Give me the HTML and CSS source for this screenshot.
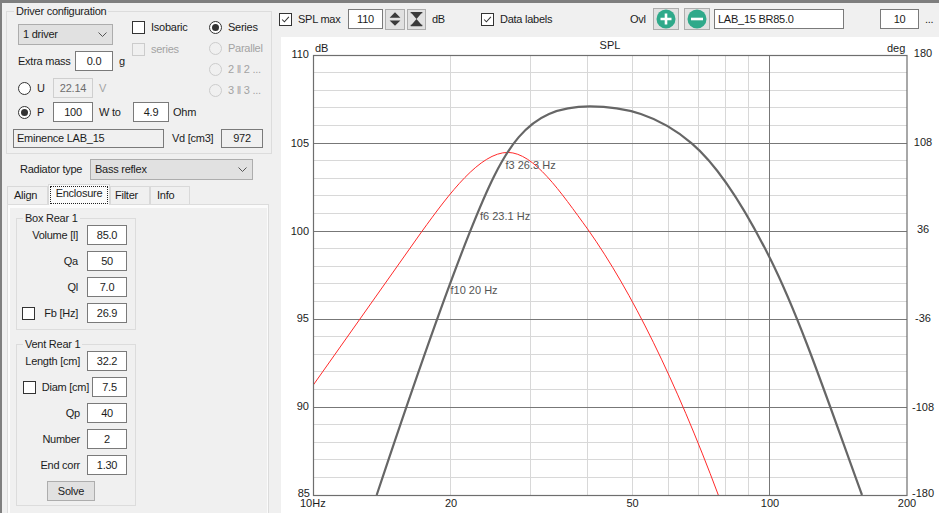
FILE: index.html
```html
<!DOCTYPE html>
<html lang="en">
<head>
<meta charset="utf-8">
<title>Driver configuration</title>
<link rel="stylesheet" href="styles.css">
</head>
<body>
<div class="app">
  <aside class="left">
    <fieldset class="group driver">
      <legend>Driver configuration</legend>
      <div class="dc-top">
        <div class="dc-main">
          <div class="dc-head">
            <div class="dc-head-left">
              <div class="combo combo-driver"><span>1 driver</span><svg class="chev" viewBox="0 0 9 5"><path d="M.5 .5 4.500 4.500 8.500 .5"/></svg></div>
              <div class="extra-row"><span class="extra-label">Extra mass</span><span class="field w38">0.0</span><span class="unit-g">g</span></div>
            </div>
            <div class="dc-checks">
              <div class="opt"><span class="check"></span><span>Isobaric</span></div>
              <div class="opt off"><span class="check"></span><span>series</span></div>
            </div>
          </div>
          <div class="power-row row-u"><span class="radio"></span><span class="pw-label">U</span><span class="field w40 dis">22.14</span><span class="pw-unit off-text">V</span></div>
          <div class="power-row row-p"><span class="radio on"></span><span class="pw-label">P</span><span class="field w40">100</span><span class="pw-unit">W to</span><span class="field w36">4.9</span><span class="ohm">Ohm</span></div>
        </div>
        <div class="dc-radios">
          <div class="opt"><span class="radio on"></span><span>Series</span></div>
          <div class="opt off"><span class="radio"></span><span>Parallel</span></div>
          <div class="opt off"><span class="radio"></span><span>2 ‖ 2 ...</span></div>
          <div class="opt off"><span class="radio"></span><span>3 ‖ 3 ...</span></div>
        </div>
      </div>
      <div class="name-row"><span class="field name">Eminence LAB_15</span><span class="vd-label">Vd [cm3]</span><span class="field ro w42">972</span></div>
    </fieldset>

    <div class="radiator"><span class="rad-label">Radiator type</span><div class="combo combo-rad"><span>Bass reflex</span><svg class="chev" viewBox="0 0 9 5"><path d="M.5 .5 4.500 4.500 8.500 .5"/></svg></div></div>

    <div class="tabs">
      <span class="tab t-align">Align</span>
      <span class="tab active"><span class="focus">Enclosure</span></span>
      <span class="tab t-filter">Filter</span>
      <span class="tab t-info">Info</span>
    </div>
    <div class="tabpage">
      <div class="tabinner">
        <fieldset class="group sub box">
          <legend>Box Rear 1</legend>
          <div class="frow"><span class="flabel">Volume [l]</span><span class="field w40">85.0</span></div>
          <div class="frow"><span class="flabel">Qa</span><span class="field w40">50</span></div>
          <div class="frow"><span class="flabel">Ql</span><span class="field w40">7.0</span></div>
          <div class="frow"><span class="check"></span><span class="flabel">Fb [Hz]</span><span class="field w40">26.9</span></div>
        </fieldset>
        <fieldset class="group sub vent">
          <legend>Vent Rear 1</legend>
          <div class="frow"><span class="flabel">Length [cm]</span><span class="field w40">32.2</span></div>
          <div class="frow diam"><span class="check"></span><span class="flabel">Diam [cm]</span><span class="field w35">7.5</span></div>
          <div class="frow"><span class="flabel">Qp</span><span class="field w40">40</span></div>
          <div class="frow"><span class="flabel">Number</span><span class="field w40">2</span></div>
          <div class="frow"><span class="flabel">End corr</span><span class="field w40">1.30</span></div>
          <div class="solve">Solve</div>
        </fieldset>
      </div>
    </div>
  </aside>

  <main class="right">
    <div class="toolbar">
      <span class="check"><svg viewBox="0 0 13 13"><path d="M2.500 6.500 5.200 9.200 10.500 3.500"/></svg></span>
      <span class="tb-text t-spl">SPL max</span>
      <span class="field w35">110</span>
      <span class="tbtn ud"><svg viewBox="0 0 20 21"><path d="M10 2.500 16 8.500H4ZM4 11.500H16L10 17.500Z"/></svg></span>
      <span class="tbtn hg"><svg viewBox="0 0 19 21"><path d="M3 2.500H16L9.500 10 16 17.500H3L9.500 10Z"/><path d="M3 2h13v1.500H3zM3 16.500h13V18H3z"/></svg></span>
      <span class="tb-text t-db">dB</span>
      <span class="check"><svg viewBox="0 0 13 13"><path d="M2.500 6.500 5.200 9.200 10.500 3.500"/></svg></span>
      <span class="tb-text t-labels">Data labels</span>
      <span class="tb-text t-ovl">Ovl</span>
      <span class="tbtn round first"><svg viewBox="0 0 24 20"><circle cx="12" cy="10" r="9.500"/><path d="M12 4.500v11M6.500 10h11"/></svg></span>
      <span class="tbtn round second"><svg viewBox="0 0 24 20"><circle cx="12" cy="10" r="9.500"/><path d="M6 10h12"/></svg></span>
      <span class="field ovl-name">LAB_15 BR85.0</span>
      <span class="field w39 ovl-count">10</span>
      <span class="tb-text t-more">...</span>
    </div>
    <svg class="chart" viewBox="281 37 658 476" xmlns="http://www.w3.org/2000/svg">
      <path class="grid" d="M313 72.500H907M313 90.500H907M313 107.500H907M313 125.500H907M313 160.500H907M313 178.500H907M313 195.500H907M313 213.500H907M313 248.500H907M313 266.500H907M313 283.500H907M313 301.500H907M313 336.500H907M313 354.500H907M313 371.500H907M313 389.500H907M313 424.500H907M313 442.500H907M313 459.500H907M313 477.500H907"/>
      <path class="grid" d="M450.500 55V495M530.500 55V495M587.500 55V495M632.500 55V495M668.500 55V495M698.500 55V495M725.500 55V495M748.500 55V495"/>
      <path class="major" d="M313 143.500H907M313 231.500H907M313 319.500H907M313 407.500H907M769.500 55V495"/>
      <path class="red" d="M313.300 385L421.700 231.700C449.700 193 480 152.400 508 152.400C534 153 560 191 588.300 230C631.300 291 675.300 380 718.300 495"/>
      <path class="gray" d="M376.700 495C407 404 440 306.700 470 231.700C504 146.700 526 106.300 590 106.300C624 106.300 657.700 114.400 691.700 143.300C717.700 165.400 744 206.300 770 258.300C801 320.300 831 410 862 495"/>
      <rect class="frame" x="313.500" y="55.500" width="593.500" height="440"/>
      <g class="axis">
        <text class="end" x="309" y="58">110</text>
        <text class="end" x="309" y="147">105</text>
        <text class="end" x="309" y="235">100</text>
        <text class="end" x="309" y="322">95</text>
        <text class="end" x="309" y="410">90</text>
        <text class="end" x="310" y="497">85</text>
        <text class="mid" x="923" y="57">180</text>
        <text class="mid" x="923" y="146">108</text>
        <text class="mid" x="923" y="233">36</text>
        <text class="mid" x="923" y="322">-36</text>
        <text class="mid" x="923" y="411">-108</text>
        <text class="mid" x="923" y="497">-180</text>
        <text x="300" y="507">10Hz</text>
        <text class="mid" x="451" y="507">20</text>
        <text class="mid" x="632.500" y="507">50</text>
        <text class="mid" x="770" y="507">100</text>
        <text class="mid" x="907" y="507">200</text>
        <text x="315" y="52">dB</text>
        <text class="mid" x="610" y="49">SPL</text>
        <text x="887" y="52">deg</text>
      </g>
      <g class="datalabels">
        <text x="505.500" y="169">f3 26.3 Hz</text>
        <text x="480" y="220">f6 23.1 Hz</text>
        <text x="450.500" y="294">f10 20 Hz</text>
      </g>
    </svg>
  </main>
</div>
</body>
</html>
```

FILE: styles.css
```css
* { box-sizing: border-box; }
html, body { margin: 0; height: 100%; overflow: hidden; }
body {
  font: 11px/13px "Liberation Sans", Arial, sans-serif;
  letter-spacing: -.25px;
  color: #1c1c1c;
  background: #f0f0f0;
}
.app {
  display: flex;
  width: 939px;
  height: 513px;
  border-top: 3px solid #7f7f7f;
  border-left: 2px solid #7f7f7f;
  overflow: hidden;
}
.left { width: 268px; flex: none; }
.right { flex: 1; min-width: 0; display: flex; flex-direction: column; }

/* shared controls */
.group {
  margin: 0;
  min-width: 0;
  border: 1px solid #dcdcdc;
  padding: 0;
}
.group legend { padding: 0 2px; margin-left: 0; line-height: 13px; }
.driver legend { margin-left: 1px; }
.field {
  display: flex;
  align-items: center;
  justify-content: center;
  flex: none;
  height: 20px;
  background: #fff;
  border: 1px solid #7a7a7a;
}
.field.dis { background: #f0f0f0; border-color: #cfcfcf; color: #6d6d6d; }
.field.ro, .field.name { background: #f0f0f0; }
.w35 { width: 35px; }
.w36 { width: 36px; }
.w38 { width: 38px; }
.w39 { width: 39px; }
.w40 { width: 40px; }
.w42 { width: 42px; }
.check {
  display: block;
  flex: none;
  width: 13px;
  height: 13px;
  background: #fff;
  border: 1px solid #333;
}
.check svg { display: block; width: 11px; height: 11px; }
.check path { fill: none; stroke: #333; stroke-width: 1.2; }
.radio {
  position: relative;
  display: block;
  flex: none;
  width: 13px;
  height: 13px;
  background: #fff;
  border: 1px solid #333;
  border-radius: 50%;
}
.radio.on::after {
  content: "";
  position: absolute;
  inset: 2px;
  border-radius: 50%;
  background: #333;
}
.opt { display: flex; align-items: center; gap: 6px; height: 13px; }
.opt.off { color: #a3a3a3; }
.opt.off .check, .opt.off .radio { border-color: #cccccc; background: #f0f0f0; }
.off-text { color: #a3a3a3; }
.combo {
  display: flex;
  align-items: center;
  justify-content: space-between;
  height: 21px;
  padding: 0 5px 0 4px;
  background: #e1e1e1;
  border: 1px solid #adadad;
}
.chev { width: 9px; height: 5px; }
.chev path { fill: none; stroke: #555; stroke-width: 1; }

/* driver group */
.driver { width: 266px; margin: 2px 0 0 4px; padding: 0 6px 5px; }
.dc-top { display: flex; }
.dc-main { width: 196px; flex: none; }
.dc-head { display: flex; height: 54px; }
.dc-head-left { width: 119px; flex: none; padding: 6px 0 0 5px; }
.combo-driver { width: 95px; }
.extra-row { display: flex; align-items: center; margin-top: 6px; }
.extra-label { width: 57px; }
.unit-g { margin-left: 6px; }
.dc-checks { display: flex; flex-direction: column; gap: 9px; padding-top: 3px; }
.power-row { display: flex; align-items: center; padding-left: 5px; }
.row-u { margin-top: 6px; }
.row-p { margin-top: 4px; }
.pw-label { width: 16px; margin-left: 6px; }
.pw-unit { width: 34px; margin-left: 6px; }
.ohm { margin-left: 4px; }
.dc-radios { display: flex; flex-direction: column; gap: 8px; padding-top: 3px; }
.name-row { display: flex; align-items: center; margin-top: 7px; }
.field.name { width: 151px; height: 19px; justify-content: flex-start; padding-left: 3px; }
.vd-label { width: 49px; margin-left: 8px; }
.field.w42 { height: 19px; }

/* radiator */
.radiator { display: flex; align-items: center; margin-top: 5px; padding-left: 18px; }
.rad-label { width: 70px; }
.combo-rad { width: 163px; }

/* tabs */
.tabs { display: flex; align-items: flex-end; height: 20px; margin: 4px 0 0 5px; }
.tab {
  display: flex;
  align-items: center;
  height: 18px;
  background: #f0f0f0;
  border: 1px solid #d9d9d9;
  border-bottom: 0;
}
.t-align { width: 41px; padding-left: 6px; }
.t-filter { width: 40px; padding-left: 4px; }
.t-info { width: 40px; padding-left: 6px; }
.tab.active {
  position: relative;
  width: 62px;
  height: 21px;
  margin-bottom: -1px;
  padding: 1px;
  background: #fbfbfb;
}
.focus {
  display: flex;
  align-items: center;
  justify-content: center;
  width: 100%;
  height: 100%;
  padding-bottom: 3px;
  border: 1px dotted #222;
}
.tabpage {
  width: 262px;
  height: 320px;
  margin-left: 5px;
  padding: 3px 1px 0 2px;
  background: #fbfbfb;
  border: 1px solid #dcdcdc;
  border-bottom: 0;
}
.tabinner { height: 100%; padding: 4px 0 0 6px; background: #f0f0f0; }

/* sub groups */
.sub { width: 120px; padding: 0 8px 6px 6px; }
.frow { display: flex; align-items: center; justify-content: flex-end; gap: 9px; height: 20px; margin-bottom: 6px; }
.frow:last-of-type { margin-bottom: 0; }
.frow .check { margin-right: auto; }
.flabel { white-space: nowrap; }
.vent { margin-top: 8px; padding-bottom: 4px; }
.vent .frow { gap: 7px; }
.vent .diam { gap: 3px; }
.solve {
  display: flex;
  align-items: center;
  justify-content: center;
  width: 48px;
  height: 20px;
  margin: 6px 0 0 24px;
  background: #e1e1e1;
  border: 1px solid #adadad;
}

/* toolbar */
.toolbar { display: flex; align-items: center; flex: none; height: 34px; padding: 0 0 2px 9px; }
.tb-text { flex: none; white-space: nowrap; }
.t-spl { width: 50px; margin-left: 6px; }
.t-db { width: 49px; margin-left: 6px; }
.t-labels { width: 130px; margin-left: 6px; }
.t-ovl { width: 23px; }
.t-more { margin-left: 6px; }
.tbtn {
  display: block;
  flex: none;
  height: 21px;
  background: #e1e1e1;
  border: 1px solid #adadad;
}
.tbtn svg { display: block; width: 100%; height: 100%; }
.ud { width: 20px; margin-left: 2px; }
.hg { width: 19px; margin-left: 2px; }
.ud path, .hg path { fill: #3a3a3a; }
.round { width: 26px; height: 22px; }
.round.second { margin-left: 5px; }
.round circle { fill: #2fa98a; }
.round path { fill: none; stroke: #fff; stroke-width: 2.6; }
.ovl-name { width: 130px; margin-left: 4px; justify-content: flex-start; padding-left: 3px; }
.ovl-count { margin-left: 36px; }

/* chart */
.chart { display: block; width: 658px; height: 476px; margin-left: 11px; flex: none; background: #fff; }
.grid { fill: none; stroke: #d8d8d8; stroke-width: 1; }
.major { fill: none; stroke: #777; stroke-width: 1; }
.frame { fill: none; stroke: #6e6e6e; stroke-width: 1.2; }
.red { fill: none; stroke: #ff2a2a; stroke-width: 1; }
.gray { fill: none; stroke: #666; stroke-width: 2.2; }
.axis text, .datalabels text { font: 11px "Liberation Sans", Arial, sans-serif; letter-spacing: 0; fill: #1c1c1c; }
.axis .end { text-anchor: end; }
.axis .mid { text-anchor: middle; }
.datalabels text { fill: #555; }
```
